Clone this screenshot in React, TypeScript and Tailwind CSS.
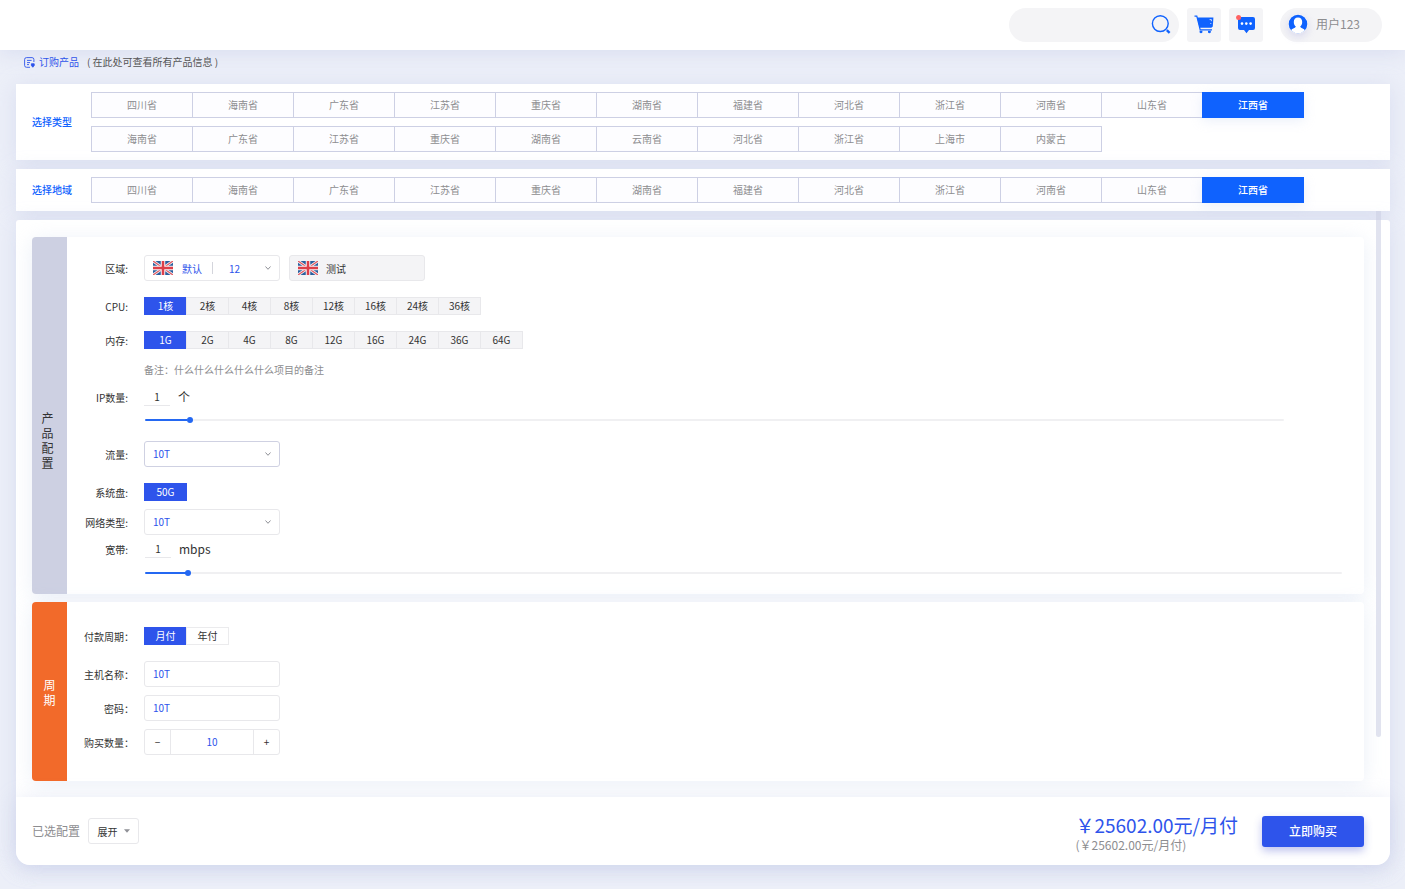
import React, { useState } from "react";

const PROVINCES = ["四川省", "海南省", "广东省", "江苏省", "重庆省", "湖南省", "福建省", "河北省", "浙江省", "河南省", "山东省", "江西省"];
const MORE = ["海南省", "广东省", "江苏省", "重庆省", "湖南省", "云南省", "河北省", "浙江省", "上海市", "内蒙古"];

function Flag() {
  return (
    <svg className="h-[14px] w-5 shrink-0" viewBox="0 0 40 28" preserveAspectRatio="none" aria-hidden="true">
      <rect width="40" height="28" fill="#2a5f9e" />
      <path d="M0 0L40 28M40 0L0 28" stroke="#f3f3f6" strokeWidth="5.6" />
      <path d="M0 0L40 28M40 0L0 28" stroke="#e0575f" strokeWidth="2.4" />
      <path d="M20 0V28M0 14H40" stroke="#f6f6f8" strokeWidth="9" />
      <path d="M20 0V28M0 14H40" stroke="#dd3f49" strokeWidth="5" />
    </svg>
  );
}

function Chevron() {
  return (
    <svg className="pointer-events-none size-[6px] shrink-0" viewBox="0 0 6 6" fill="none" stroke="#8f9096" aria-hidden="true">
      <path d="M0.5 1.5L3 4.3L5.5 1.5" />
    </svg>
  );
}

function RegionBar({ title, items }: { title: string; items: string[] }) {
  const [active, setActive] = useState(11);
  return (
    <section className="flex items-center bg-white py-2 pr-4 pl-4 shadow-[0_3px_20px_rgba(190,198,230,0.4)]">
      <h2 className="w-[59px] shrink-0 pb-[2px] text-[10px] font-medium text-[#0f62fe]">{title}</h2>
      <div className="flex flex-wrap gap-y-2">
        {items.map((name, i) => (
          <button
            key={i}
            type="button"
            onClick={() => setActive(i)}
            className={
              i === active
                ? "-mr-px h-[26px] w-[102px] border border-[#0f62fe] bg-[#0f62fe] pb-[2px] text-[10px] font-medium text-white shadow-[0_3px_12px_rgba(190,205,240,0.3)]"
                : "-mr-px h-[26px] w-[102px] border border-[#cdd0e4] bg-[#fdfdff] pb-[2px] text-[10px] text-[#8d8d90]"
            }
          >
            {name}
          </button>
        ))}
      </div>
    </section>
  );
}

function Options({ label, options, plain }: { label: string; options: string[]; plain?: boolean }) {
  const [active, setActive] = useState(0);
  return (
    <div className="flex" role="group" aria-label={label}>
      {options.map((o, i) => (
        <button
          key={o}
          type="button"
          onClick={() => setActive(i)}
          className={
            i === active
              ? "-mr-px h-[18px] w-[43px] border border-[#2e54eb] bg-[#2e54eb] text-[10px] leading-4 text-white"
              : plain
                ? "-mr-px h-[18px] w-[43px] border border-[#ebebed] bg-white text-[10px] leading-4 text-[#333]"
                : "-mr-px h-[18px] w-[43px] border border-[#e8e8eb] bg-[#f4f4f6] text-[10px] leading-4 text-[#333]"
          }
        >
          {o}
        </button>
      ))}
    </div>
  );
}

function Slider({ label, initial }: { label: string; initial: number }) {
  const [value, setValue] = useState(initial);
  const fill = { "--fill": `${value / 10}%` } as React.CSSProperties;
  return (
    <input
      type="range"
      min={0}
      max={1000}
      value={value}
      aria-label={label}
      onChange={(e) => setValue(Number(e.target.value))}
      style={fill}
      className="block h-[18px] w-full cursor-pointer appearance-none bg-transparent [&::-webkit-slider-runnable-track]:h-[2px] [&::-webkit-slider-runnable-track]:rounded-full [&::-webkit-slider-runnable-track]:bg-[linear-gradient(to_right,#2468f2_var(--fill),#f0f0f2_var(--fill))] [&::-webkit-slider-thumb]:-mt-[2px] [&::-webkit-slider-thumb]:size-[6px] [&::-webkit-slider-thumb]:appearance-none [&::-webkit-slider-thumb]:rounded-full [&::-webkit-slider-thumb]:bg-[#2468f2]"
    />
  );
}

function Select({ id, strong }: { id: string; strong?: boolean }) {
  return (
    <div
      className={
        strong
          ? "flex h-[26px] w-[136px] items-center rounded-[3px] border border-[#cfd1e2] bg-white pr-2"
          : "flex h-[26px] w-[136px] items-center rounded-[3px] border border-[#e8e8eb] bg-white pr-2"
      }
    >
      <select id={id} className="h-full min-w-0 flex-1 appearance-none bg-transparent pb-px pl-2 text-[10px] text-[#2e54eb] outline-none">
        <option>10T</option>
        <option>20T</option>
      </select>
      <Chevron />
    </div>
  );
}

const rowLabel = "w-[61px] shrink-0 text-right text-[10px] text-[#333]";
const wideLabel = "w-[67px] shrink-0 text-right text-[10px] text-[#333]";
const textBox = "h-[26px] w-[136px] rounded-[3px] border border-[#e8e8eb] bg-white px-2 pb-px text-[10px] text-[#2e54eb] outline-none";

export default function App() {
  const [count, setCount] = useState(10);
  return (
    <div className="min-h-screen bg-[#eceff8] pb-6 font-['Noto_Sans_CJK_SC',sans-serif] text-[#333]">
      <header className="flex h-[50px] items-center justify-end bg-white pr-[23px] shadow-[0_3px_20px_rgba(190,198,230,0.4)]">
        <label className="flex h-[34px] w-[170px] items-center rounded-full bg-[#f4f4f6] pr-2 pl-4">
          <input type="search" aria-label="搜索" className="min-w-0 flex-1 bg-transparent text-xs outline-none" />
          <svg className="size-5" viewBox="0 0 20 20" fill="none" stroke="#0f62fe" aria-hidden="true">
            <circle cx="9.3" cy="8.6" r="7.9" strokeWidth="1.4" />
            <path d="M15.8 15.2L18.6 17.8" strokeWidth="2.4" />
          </svg>
        </label>
        <button type="button" aria-label="购物车" className="ml-2 flex size-[34px] items-center justify-center rounded-[3px] bg-[#f4f4f6]">
          <svg className="size-5" viewBox="0 0 20 20" aria-hidden="true">
            <path d="M0.5 1.2H2.8L6.2 14.8H18" fill="none" stroke="#0f62fe" strokeWidth="1.2" />
            <path d="M3 2.6H19.4L18.8 11.6L17.3 12.8H5.6Z" fill="#0f62fe" />
            <path d="M15.6 4.6H17.4V6.2M17.2 8L16.4 9" fill="none" stroke="#f4f4f6" strokeWidth="0.8" />
            <path d="M5.6 15.8H8.4V17.6Q7 19 5.6 17.6ZM14 15.8H16.8V17.6Q15.4 19 14 17.6Z" fill="#0f62fe" />
          </svg>
        </button>
        <button type="button" aria-label="消息" className="ml-2 flex size-[34px] items-center justify-center rounded-[3px] bg-[#f4f4f6]">
          <svg className="size-5" viewBox="0 0 20 20" aria-hidden="true">
            <path d="M4 2H17Q19 2 19 4V13Q19 15 17 15H13L10.5 18.2L8 15H4Q2 15 2 13V4Q2 2 4 2Z" fill="#0f62fe" />
            <g fill="#fff">
              <circle cx="6" cy="8.6" r="1.3" />
              <circle cx="10.3" cy="8.6" r="1.3" />
              <circle cx="14.6" cy="8.6" r="1.3" />
            </g>
            <circle cx="2.6" cy="2.5" r="2.5" fill="#ff6262" />
          </svg>
        </button>
        <button type="button" className="ml-[17px] flex h-[34px] w-[102px] items-center gap-2 rounded-full bg-[#f4f4f6] pb-[2px] pl-2 text-[12px] text-[#8d8d90]">
          <svg className="size-5 rounded-full shadow-[0_3px_8px_rgba(150,150,220,0.3)]" viewBox="0 0 20 20" aria-hidden="true">
            <circle cx="10" cy="10" r="9.3" fill="#0f62fe" />
            <path d="M10 3.4C12.8 3.4 14.2 5.2 14.2 7.9C14.2 9.9 13.4 11.4 12.2 12.4C12.5 14 15.8 14.2 17 16.2Q14 19.3 10 19.3T3 16.2C4.2 14.2 7.5 14 7.8 12.4C6.6 11.4 5.8 9.9 5.8 7.9C5.8 5.2 7.2 3.4 10 3.4Z" fill="#fff" />
          </svg>
          用户123
        </button>
      </header>

      <main className="mr-[15px] ml-4">
        <div className="flex h-[34px] items-start pt-[3px] pl-2 text-[10px] leading-[18px]">
          <svg className="mt-1 mr-1 size-[11px]" viewBox="0 0 11 11" fill="none" stroke="#2e54eb" strokeWidth="0.9" aria-hidden="true">
            <path d="M6 10.3H2.5Q0.6 10.3 0.6 8.4V2.5Q0.6 0.6 2.5 0.6H8Q9.9 0.6 9.9 2.5V5M3 3.4H7.6M3 5.6H6M3 7.6H5" />
            <path d="M7.4 6.8H10.2V8.4L8.8 10.2L7.4 8.4Z" fill="#2e54eb" />
          </svg>
          <h1 className="text-[#2e54eb]">订购产品</h1>
          <p className="ml-2 text-[#555]">( 在此处可查看所有产品信息 )</p>
        </div>

        <div className="flex flex-col gap-[9px]">
          <RegionBar title="选择类型" items={[...PROVINCES, ...MORE]} />
          <RegionBar title="选择地域" items={PROVINCES} />
        </div>

        <div className="relative mt-[9px] rounded-t-[3px] rounded-b-[14px] bg-white shadow-[0_3px_20px_rgba(190,198,230,0.4)]">
          <div className="absolute -top-[9px] right-[9px] h-[526px] w-[5px] rounded-b-full bg-[#cdd0e4]/60" />
          <div className="flex flex-col gap-2 pt-[17px] pr-[26px] pb-4 pl-4">
            <section className="flex rounded-[4px] bg-white shadow-[0_3px_20px_rgba(205,218,238,0.4)]">
              <h2 className="flex w-[35px] shrink-0 items-center justify-center rounded-l-[4px] bg-[#cdd0e2] pt-12 pr-1">
                <span className="w-3 text-[12px] leading-[15px] font-normal">产品配置</span>
              </h2>
              <div className="min-w-0 flex-1 pt-[18px] pr-[22px] pb-3">
                <div className="flex items-center gap-4">
                  <label htmlFor="area" className={rowLabel}>区域:</label>
                  <div className="flex gap-[9px]">
                    <div className="flex h-[26px] w-[136px] items-center rounded-[3px] border border-[#e8e8eb] bg-white pr-2 pl-2 text-[10px] text-[#2e54eb]">
                      <Flag />
                      <span className="ml-[9px]">默认</span>
                      <span className="ml-[10px] h-3 w-px bg-[#d4d5dc]" />
                      <select id="area" className="h-full min-w-0 flex-1 appearance-none bg-transparent pl-4 outline-none">
                        <option>12</option>
                        <option>24</option>
                      </select>
                      <Chevron />
                    </div>
                    <button type="button" className="flex h-[26px] w-[136px] items-center gap-2 rounded-[3px] border border-[#e8e8eb] bg-[#f4f4f6] pl-2 text-[10px]">
                      <Flag />
                      测试
                    </button>
                  </div>
                </div>
                <div className="mt-4 flex items-center gap-4">
                  <span className={rowLabel}>CPU:</span>
                  <Options label="CPU" options={["1核", "2核", "4核", "8核", "12核", "16核", "24核", "36核"]} />
                </div>
                <div className="mt-4 flex items-center gap-4">
                  <span className={rowLabel}>内存:</span>
                  <Options label="内存" options={["1G", "2G", "4G", "8G", "12G", "16G", "24G", "36G", "64G"]} />
                </div>
                <p className="mt-3 ml-[77px] text-[10px] leading-[18px] text-[#8d8d90]">备注：什么什么什么什么什么项目的备注</p>
                <div className="mt-2 flex h-5 items-center gap-4">
                  <label htmlFor="ip" className={rowLabel}>IP数量:</label>
                  <div className="flex items-center gap-2">
                    <input id="ip" defaultValue="1" className="h-[18px] w-[26px] border-b border-[#e8e8eb] text-center text-[10px] outline-none" />
                    <span className="text-[12px]">个</span>
                  </div>
                </div>
                <div className="mt-1 mr-[58px] ml-[78px]">
                  <Slider label="IP数量" initial={37} />
                </div>
                <div className="mt-3 flex items-center gap-4">
                  <label htmlFor="flow" className={rowLabel}>流量:</label>
                  <Select id="flow" strong />
                </div>
                <div className="mt-4 flex items-center gap-4">
                  <span className={rowLabel}>系统盘:</span>
                  <Options label="系统盘" options={["50G"]} />
                </div>
                <div className="mt-2 flex items-center gap-4">
                  <label htmlFor="net" className={rowLabel}>网络类型:</label>
                  <Select id="net" />
                </div>
                <div className="mt-1 flex h-5 items-center gap-[17px]">
                  <label htmlFor="band" className={rowLabel}>宽带:</label>
                  <div className="flex items-center gap-2">
                    <input id="band" defaultValue="1" className="h-[18px] w-[26px] border-b border-[#e8e8eb] text-center text-[10px] outline-none" />
                    <span className="text-[12px] leading-5">mbps</span>
                  </div>
                </div>
                <div className="mt-[5px] ml-[78px]">
                  <Slider label="宽带" initial={34} />
                </div>
              </div>
            </section>

            <section className="flex rounded-[4px] bg-white shadow-[0_3px_20px_rgba(205,218,238,0.4)]">
              <h2 className="flex w-[35px] shrink-0 items-center justify-center rounded-l-[4px] bg-[#f26a2a] text-white">
                <span className="w-3 text-[12px] leading-[15px] font-normal">周期</span>
              </h2>
              <div className="flex-1 pt-[25px] pb-[26px]">
                <div className="flex items-center gap-[10px]">
                  <span className={wideLabel}>付款周期：</span>
                  <Options label="付款周期" options={["月付", "年付"]} plain />
                </div>
                <div className="mt-4 flex items-center gap-[10px]">
                  <label htmlFor="host" className={wideLabel}>主机名称：</label>
                  <input id="host" defaultValue="10T" className={textBox} />
                </div>
                <div className="mt-2 flex items-center gap-[10px]">
                  <label htmlFor="pass" className={wideLabel}>密码：</label>
                  <input id="pass" defaultValue="10T" className={textBox} />
                </div>
                <div className="mt-2 flex items-center gap-[10px]">
                  <label htmlFor="qty" className={wideLabel}>购买数量：</label>
                  <div className="flex h-[26px] w-[136px] rounded-[3px] border border-[#e8e8eb] text-[10px]">
                    <button type="button" aria-label="减少" onClick={() => setCount(Math.max(1, count - 1))} className="w-[25px] pb-px">−</button>
                    <input id="qty" value={count} onChange={(e) => setCount(Number(e.target.value) || 1)} className="min-w-0 flex-1 border-x border-[#e8e8eb] pb-px text-center text-[#2e54eb] outline-none" />
                    <button type="button" aria-label="增加" onClick={() => setCount(count + 1)} className="w-[25px] pb-px">+</button>
                  </div>
                </div>
              </div>
            </section>
          </div>

          <footer className="relative flex h-[68px] items-center rounded-b-[14px] bg-white pr-[26px] pl-4 shadow-[0_3px_20px_rgba(190,198,230,0.4)]">
            <span className="text-[12px] text-[#8d8d90]">已选配置</span>
            <button type="button" className="ml-2 flex h-[26px] w-[51px] items-center justify-center gap-[6px] rounded-[3px] border border-[#e8e8eb] text-[10px]">
              展开
              <svg className="h-[4px] w-[6px]" viewBox="0 0 6 4" fill="#8f9096" aria-hidden="true">
                <path d="M0 0.3H6L3 3.7Z" />
              </svg>
            </button>
            <div className="ml-auto pt-1">
              <p className="text-[19px] leading-6 text-[#2e54eb]">￥25602.00元/月付</p>
              <p className="text-[12px] leading-4 text-[#8d8d90]">(￥25602.00元/月付)</p>
            </div>
            <button type="button" className="ml-6 h-[31px] w-[102px] rounded-[3px] bg-[#2e54eb] text-[12px] font-medium text-white shadow-[0_4px_8px_rgba(46,60,200,0.3)]">立即购买</button>
          </footer>
        </div>
      </main>
    </div>
  );
}
